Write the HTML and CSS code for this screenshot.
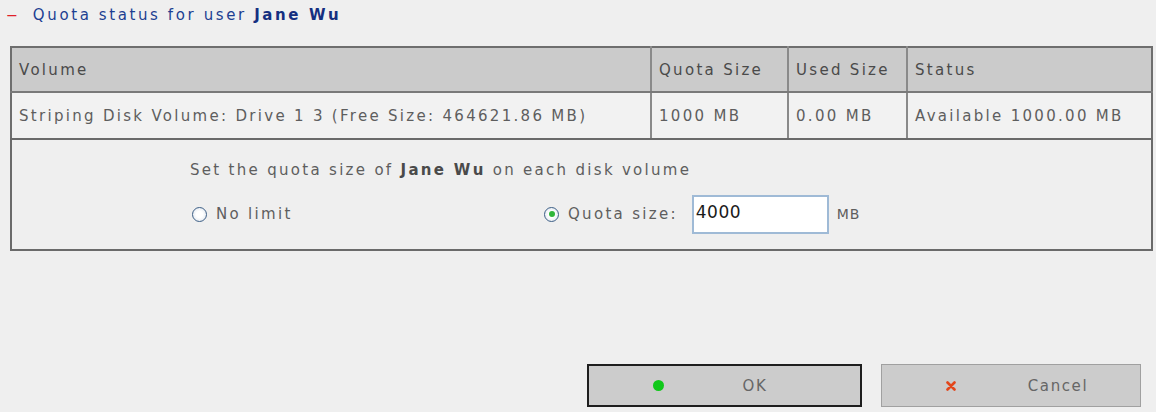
FILE: index.html
```html
<!DOCTYPE html>
<html>
<head>
<meta charset="utf-8">
<link rel="stylesheet" href="styles.css">
</head>
<body>
<div class="page">
  <div class="title"><span class="dash">–</span> Quota status for user <b>Jane Wu</b></div>
  <table class="quota">
    <tr class="head">
      <th class="c-vol">Volume</th>
      <th class="c-quota">Quota Size</th>
      <th class="c-used">Used Size</th>
      <th class="c-status">Status</th>
    </tr>
    <tr class="row">
      <td>Striping Disk Volume: Drive 1 3 (Free Size: 464621.86 MB)</td>
      <td>1000 MB</td>
      <td>0.00 MB</td>
      <td>Available 1000.00 MB</td>
    </tr>
  </table>
  <div class="panel">
    <div class="prompt">Set the quota size of <b>Jane Wu</b> on each disk volume</div>
    <div class="options">
      <label class="opt nolimit"><span class="radio"></span>No limit</label>
      <label class="opt size"><span class="radio checked"></span>Quota size:<span class="field">4000</span><span class="unit">MB</span></label>
    </div>
  </div>
  <div class="actions">
    <button class="btn ok"><span class="icon dot"></span><span class="label">OK</span></button>
    <button class="btn cancel"><svg class="icon cross" viewBox="0 0 10 10" width="10" height="10"><path d="M1.5 1.5 L8.5 8.5 M8.5 1.5 L1.5 8.5" stroke="#e3461b" stroke-width="2.6" stroke-linecap="round"/></svg><span class="label">Cancel</span></button>
  </div>
</div>
</body>
</html>
```
FILE: styles.css
```css
html, body {
  margin: 0;
  padding: 0;
  background: #efefef;
}
body {
  font-family: "DejaVu Sans", Verdana, sans-serif;
  font-size: 15px;
  letter-spacing: 2.3px;
  color: #5a5a5a;
}
.page {
  width: 1156px;
  height: 412px;
  display: flex;
  flex-direction: column;
}
.title {
  height: 32px;
  line-height: 33px;
  padding-left: 8px;
  color: #1d3f92;
  margin-top: -1px;
  letter-spacing: 2.6px;
}
.title .dash {
  color: #e0202a;
  margin-right: 10px;
  letter-spacing: 0;
  display: inline-block;
  transform: scaleX(1.5);
}
.title b {
  color: #152f80;
}
.quota {
  margin: 15px 0 0 10px;
  width: 1143px;
  border-collapse: collapse;
  table-layout: fixed;
  border: 2px solid #6e6e6e;
  border-bottom: none;
}
.quota th, .quota td {
  text-align: left;
  font-weight: normal;
  padding: 0 0 0 7px;
  border-left: 2px solid #8a8a8a;
  white-space: nowrap;
}
.quota th:first-child, .quota td:first-child {
  border-left: none;
}
.c-vol { width: 631px; }
.c-quota { width: 128px; }
.c-used { width: 110px; }
.head th {
  height: 43px;
  background: #cbcbcb;
  color: #4a4a4a;
  border-bottom: 2px solid #7a7a7a;
}
.row td {
  height: 45px;
  background: #f2f2f2;
  color: #5e5e5e;
}
.panel {
  margin-left: 10px;
  width: 1143px;
  height: 113px;
  box-sizing: border-box;
  border: 2px solid #6a6a6a;
  padding: 19px 0 0 178px;
}
.prompt {
  line-height: 22px;
  color: #5e5e5e;
}
.prompt b {
  color: #4a4a4a;
}
.options {
  display: flex;
  align-items: center;
  margin-top: 13px;
  height: 40px;
}
.opt {
  display: flex;
  align-items: center;
  color: #5e5e5e;
}
.nolimit {
  margin-left: 2px;
  width: 352px;
}
.radio {
  width: 13px;
  height: 13px;
  border: 1.5px solid #3d5f86;
  border-radius: 50%;
  background: radial-gradient(circle at 50% 50%, #ffffff 35%, #d8e0ea 100%);
  margin-right: 9px;
  position: relative;
  flex: none;
}
.radio.checked::after {
  content: "";
  position: absolute;
  left: 3.5px;
  top: 3.5px;
  width: 6px;
  height: 6px;
  border-radius: 50%;
  background: #2fb63a;
}
.field {
  display: inline-block;
  width: 131px;
  height: 35px;
  line-height: 30px;
  border: 2px solid #9fbad6;
  background: #ffffff;
  color: #1a1a1a;
  margin-left: 14px;
  padding-left: 2px;
  letter-spacing: 0.5px;
  font-size: 17px;
  box-sizing: content-box;
}
.unit {
  margin-left: 8px;
  font-size: 14px;
  letter-spacing: 1px;
}
.actions {
  display: flex;
  justify-content: flex-end;
  gap: 19px;
  padding-right: 15px;
  margin-top: 113px;
}
.btn {
  display: flex;
  align-items: center;
  height: 43px;
  background: #cccccc;
  font-family: "DejaVu Sans", Verdana, sans-serif;
  font-size: 15px;
  letter-spacing: 1.6px;
  color: #666666;
  padding: 0 0 0 64px;
  box-sizing: border-box;
}
.btn.ok {
  width: 275px;
  border: 2px solid #1e1e1e;
}
.btn.cancel {
  width: 260px;
  border: 1px solid #a0a0a0;
  padding-left: 64px;
}
.icon {
  width: 11px;
  flex: none;
}
.dot {
  height: 11px;
  width: 11px;
  border-radius: 50%;
  background: #10c81a;
}
.cross {
  width: 10px;
  height: 10px;
}
.btn .label {
  flex: 1;
  text-align: center;
  padding-right: 14px;
}
.btn.cancel .label {
  padding-right: 0;
  padding-left: 20px;
}
```
